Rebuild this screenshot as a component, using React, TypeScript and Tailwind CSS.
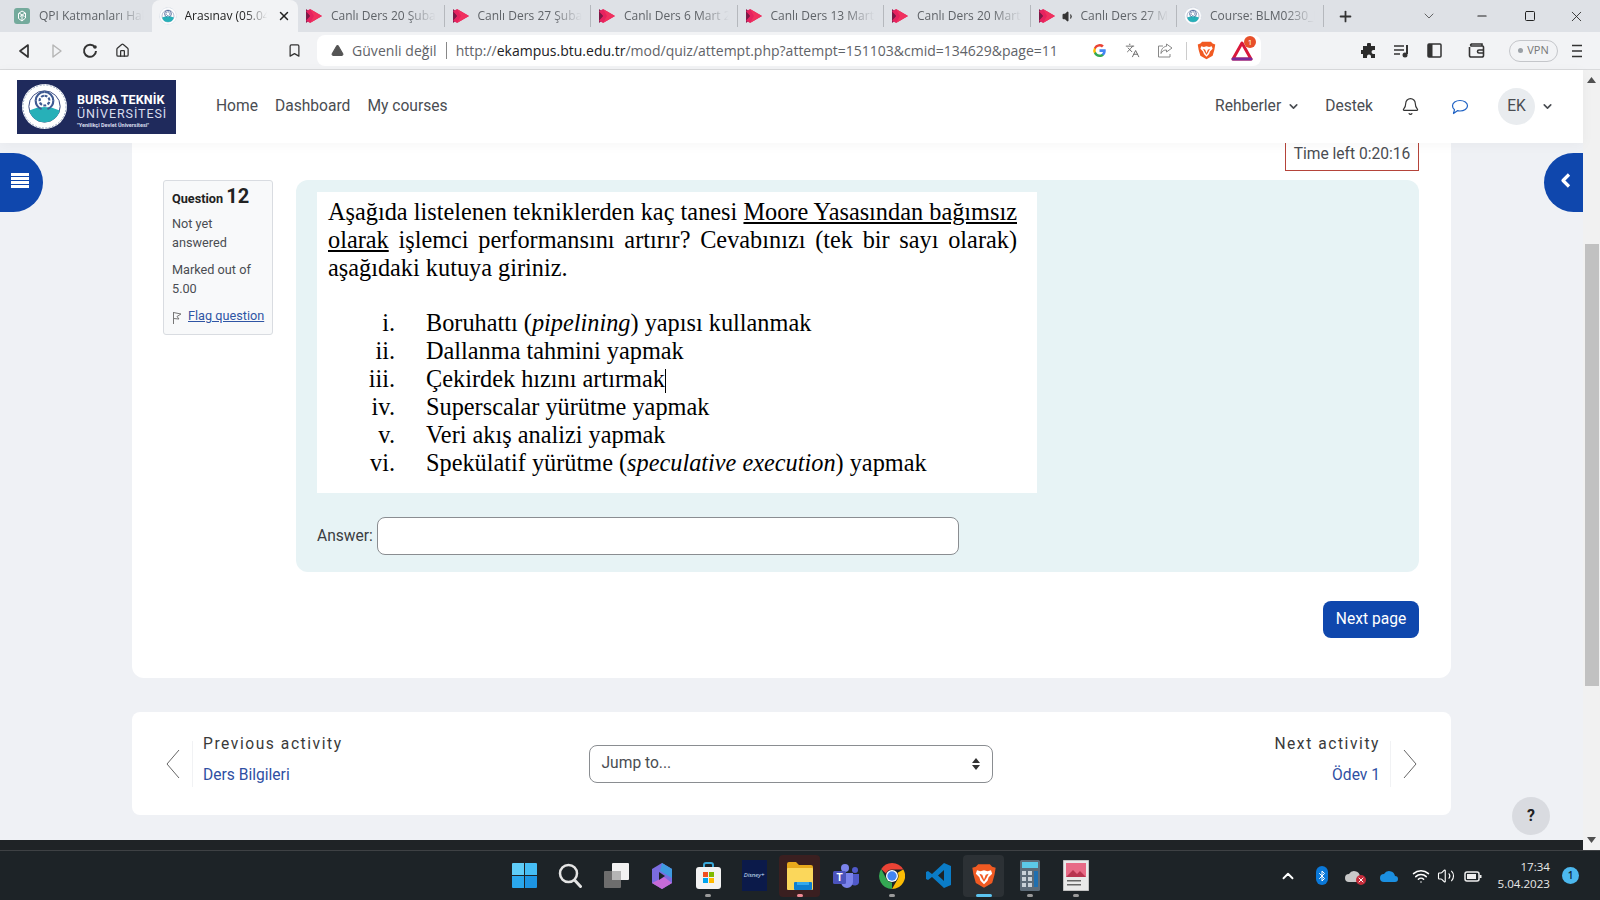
import {
  Bell,
  ChevronDown,
  ChevronUp,
  Home,
  Languages,
  Minus,
  Plus,
  Square,
  TriangleAlert,
  Volume1,
  Volume2,
  Wifi,
  X,
  Bluetooth,
  Bookmark,
} from "lucide-react";

const tabs = [
  { id: "qpi", label: "QPI Katmanları Hakkı", icon: "gpt" },
  { id: "exam", label: "Arasınav (05.04.2023)", icon: "btu", active: true },
  { id: "d1", label: "Canlı Ders 20 Şubat 2023", icon: "play" },
  { id: "d2", label: "Canlı Ders 27 Şubat 2023", icon: "play" },
  { id: "d3", label: "Canlı Ders 6 Mart 2023", icon: "play" },
  { id: "d4", label: "Canlı Ders 13 Mart 2023", icon: "play" },
  { id: "d5", label: "Canlı Ders 20 Mart 2023", icon: "play" },
  { id: "d6", label: "Canlı Ders 27 Mart 2023", icon: "play", sound: true },
  { id: "course", label: "Course: BLM0230_BLM", icon: "btu" },
];

const techniques = [
  { num: "i.", text: <>Boruhattı (<em>pipelining</em>) yapısı kullanmak</> },
  { num: "ii.", text: <>Dallanma tahmini yapmak</> },
  { num: "iii.", text: <>Çekirdek hızını artırmak<span className="inline-block w-px h-[24px] bg-black align-middle" /></> },
  { num: "iv.", text: <>Superscalar yürütme yapmak</> },
  { num: "v.", text: <>Veri akış analizi yapmak</> },
  { num: "vi.", text: <>Spekülatif yürütme (<em>speculative execution</em>) yapmak</> },
];

function BtuEmblem({ size = 16 }: { size?: number }) {
  return (
    <svg width={size} height={size} viewBox="0 0 48 48">
      <circle cx="24" cy="24" r="23" fill="#fff" />
      <circle cx="24" cy="24" r="22" fill="none" stroke="#8fa0bb" strokeWidth="1" strokeDasharray="2 1.500" />
      <circle cx="24" cy="24" r="16" fill="#fff" stroke="#3a4a80" strokeWidth="1" />
      <path d="M8.500 28q15.500-7 31 0a16 16 0 0 1-31 0z" fill="#27b0b8" />
      <g fill="none" stroke="#3f5a92" strokeWidth="2.200">
        <path d="M24 9a9 9 0 0 1 9 9" />
        <path d="M33 18a9 9 0 0 1-6 8.500" />
        <path d="M21 26.500a9 9 0 0 1-6-8.500" />
        <path d="M15 18a9 9 0 0 1 9-9" />
        <path d="M24 13a5 5 0 0 1 5 5 5 5 0 0 1-5 5 5 5 0 0 1-5-5 5 5 0 0 1 5-5z" strokeDasharray="3 1.500" />
      </g>
    </svg>
  );
}

function TabIcon({ kind }: { kind: string }) {
  if (kind === "gpt") {
    return (
      <svg width="16" height="16" viewBox="0 0 16 16">
        <rect width="16" height="16" rx="3" fill="#74aa9c" />
        <path d="M8 3l3.500 2v5L8 13l-3.500-2.500V5.500zM5 5l5.500 3.500M11 5L6 8.500M8 13V8" fill="none" stroke="#fff" strokeWidth="1" strokeLinejoin="round" />
      </svg>
    );
  }
  if (kind === "btu") return <BtuEmblem size={18} />;
  return (
    <svg width="18" height="18" viewBox="0 0 18 18">
      <path d="M1 2l9 7-9 7z" fill="#8e1f50" />
      <path d="M1 4.500L5 2l12 7-12 7-4-2.500L5 9z" fill="#e5225f" />
      <path d="M5 2l4 7-4 7 12-7z" fill="#f0315f" />
      <path d="M1 4.500L5 9l-4 4.500z" fill="#7c1846" />
    </svg>
  );
}

function TabBar() {
  return (
    <div className="h-8 bg-[#dee1e6] flex items-end shrink-0 font-['Open_Sans',sans-serif] text-[12px]">
      <div className="flex h-8 pl-[5px]">
        {tabs.map((tab, i) => (
          <div
            key={tab.id}
            className={
              tab.active
                ? "w-[146.500px] flex items-center gap-[8px] pl-[7px] pr-[7px] bg-[#f2f3f5] rounded-t-lg text-[#222]"
                : i === 0
                  ? "w-[146.500px] flex items-center gap-[9px] pl-[9px] pr-[6px] text-[#5f6368]"
                  : "w-[146.500px] flex items-center gap-[8px] pl-[7px] pr-[6px] text-[#5f6368] border-r border-[#b5b8bd] my-[5px]"
            }
          >
            <span className="shrink-0 flex"><TabIcon kind={tab.icon} /></span>
            {tab.sound && <Volume1 size={13} className="shrink-0 -mx-[2px] text-[#333] fill-[#333]" />}
            <span className="flex-1 overflow-hidden whitespace-nowrap [mask-image:linear-gradient(to_right,black_70%,transparent_98%)]">
              {tab.label}
            </span>
            {tab.active && <X size={14} strokeWidth={2.5} className="shrink-0 text-[#222]" />}
          </div>
        ))}
      </div>
      <div className="h-8 flex items-center flex-1 pl-[13px]">
        <Plus size={17} strokeWidth={2.5} className="text-[#333]" />
        <div className="flex-1" />
        <ChevronDown size={16} strokeWidth={1.2} className="text-[#444] mr-[38px]" />
        <Minus size={14} className="text-[#222] mr-[35px]" />
        <Square size={12} className="text-[#222] mr-[32px]" />
        <X size={17} strokeWidth={1.2} className="text-[#222] mr-[15px]" />
      </div>
    </div>
  );
}

function BraveIcon({ size = 20 }: { size?: number }) {
  return (
    <svg width={size} height={size} viewBox="0 0 24 24">
      <path d="M7 2h10l2 2 3 1-1 6-2 7-7 4-7-4-2-7-1-6 3-1z" fill="#f15a22" />
      <path d="M6 7l3 1 3-1 3 1 3-1 1 3-3 3-1 3-3 3-3-3-1-3-3-3z" fill="#fff" />
      <path d="M8 10l2.500 1 1.500 4 1.500-4 2.500-1-2 4-2 3-2-3z" fill="#f15a22" />
    </svg>
  );
}

function Toolbar() {
  return (
    <div className="h-[38px] bg-[#f2f3f5] border-b border-[#d9dadc] flex items-center shrink-0 pl-[7px] text-[#333]">
      <span className="w-[33px] flex justify-center"><svg width="14" height="16" viewBox="0 0 14 16"><path d="M11 2L3 8l8 6z" fill="none" stroke="#333" strokeWidth="1.700" strokeLinejoin="round" /></svg></span>
      <span className="w-[33px] flex justify-center"><svg width="14" height="16" viewBox="0 0 14 16"><path d="M3 2l8 6-8 6z" fill="none" stroke="#b5b5b5" strokeWidth="1.400" strokeLinejoin="round" /></svg></span>
      <span className="w-[33px] flex justify-center">
        <svg width="16" height="16" viewBox="0 0 16 16"><path d="M13 4.500A6 6 0 1 0 14 8" fill="none" stroke="#333" strokeWidth="2" /><circle cx="13" cy="4" r="1.800" fill="#333" /></svg>
      </span>
      <span className="w-[33px] flex justify-center"><Home size={15} strokeWidth={2} /></span>
      <div className="w-[139px]" />
      <span className="w-[33px] flex justify-center"><Bookmark size={15} strokeWidth={2} /></span>
      <div className="ml-[6px] w-[944px] h-[31px] bg-white rounded-lg flex items-center pl-[14px] font-['Open_Sans',sans-serif] text-[14px]">
        <TriangleAlert size={13} className="fill-[#555] text-[#555] mr-[8px]" />
        <span className="text-[#5f6368] tracking-[0.05px]">Güvenli değil</span>
        <span className="w-px h-[17px] bg-[#888] mx-[9px]" />
        <span className="text-[#5f6368]">
          http://<span className="text-[#202124]">ekampus.btu.edu.tr</span>/mod/quiz/attempt.php?attempt=151103&amp;cmid=134629&amp;page=11
        </span>
        <div className="flex-1" />
        <svg width="15" height="15" viewBox="0 0 24 24" className="mr-[18px]">
          <path d="M22 12.300c0-.8-.1-1.500-.2-2.200H12v4.200h5.600a4.800 4.800 0 0 1-2.100 3.100v2.600h3.400c2-1.800 3.100-4.500 3.100-7.700z" fill="#4285f4" />
          <path d="M12 22.500c2.800 0 5.200-.9 6.900-2.500l-3.400-2.600c-.9.600-2.100 1-3.500 1-2.700 0-5-1.800-5.800-4.300H3.200v2.700A10.500 10.500 0 0 0 12 22.500z" fill="#34a853" />
          <path d="M6.200 14.100a6.300 6.300 0 0 1 0-4.200V7.200H3.200a10.500 10.500 0 0 0 0 9.600z" fill="#fbbc05" />
          <path d="M12 5.600c1.500 0 2.900.5 3.900 1.500l3-3A10.500 10.500 0 0 0 3.200 7.200l3 2.700C7 7.400 9.300 5.600 12 5.600z" fill="#ea4335" />
        </svg>
        <Languages size={15} strokeWidth={1.500} className="text-[#666] mr-[17px]" />
        <svg width="16" height="15" viewBox="0 0 16 15" className="mr-[13px]">
          <path d="M6 3H1.500v11H13v-3" fill="none" stroke="#888" strokeWidth="1" />
          <path d="M9.500 1l5.500 4-5.500 4V7C7 7 5 8 4 10.500 4 6 6.500 3.500 9.500 3.300z" fill="none" stroke="#888" strokeWidth="1" strokeLinejoin="round" />
        </svg>
        <span className="w-px h-[18px] bg-[#ccc] mr-[9px]" />
        <BraveIcon size={21} />
        <span className="relative ml-[14px] flex">
          <svg width="22" height="20" viewBox="0 0 22 20">
            <path d="M11 2l9 16H2z" fill="none" stroke="#d9183b" strokeWidth="3" strokeLinejoin="round" />
            <path d="M2 18h18" stroke="#7a2a9a" strokeWidth="3" strokeLinecap="round" />
          </svg>
          <span className="absolute -top-[5px] -right-[3px] w-[12px] h-[12px] rounded-full bg-[#e8502a] text-white text-[8px] leading-[12px] text-center">1</span>
        </span>
        <span className="w-[8px]" />
      </div>
      <span className="ml-[100px] flex">
        <svg width="16" height="16" viewBox="0 0 16 16"><path d="M6 1.500a2 2 0 0 1 4 0V3h4v4h-1.500a2 2 0 0 0 0 4H14v4h-4v-1.500a2 2 0 0 0-4 0V15H2v-4H.5a2 2 0 0 1 0-4H2V3h4z" fill="#2b2b2b" /></svg>
      </span>
      <span className="ml-[17px] flex">
        <svg width="16" height="14" viewBox="0 0 16 14"><path d="M0 2h10M0 6h10M0 10h6" stroke="#333" strokeWidth="1.500" /><path d="M13 1v9" stroke="#333" strokeWidth="2" /><circle cx="11" cy="11" r="2.500" fill="#333" /></svg>
      </span>
      <span className="ml-[17px] flex">
        <svg width="15" height="15" viewBox="0 0 15 15"><rect x="1" y="1" width="13" height="13" rx="1" fill="none" stroke="#333" strokeWidth="1.500" /><rect x="1" y="1" width="4.500" height="13" fill="#333" /></svg>
      </span>
      <span className="ml-[26px] flex">
        <svg width="17" height="15" viewBox="0 0 17 15"><path d="M3 1h11v2.500M1.500 4v8.500a1.500 1.500 0 0 0 1.500 1.500h11a1.500 1.500 0 0 0 1.500-1.500V4A1 1 0 0 0 14.500 3H3A1.500 1.500 0 0 1 3 1" fill="none" stroke="#333" strokeWidth="1.600" /><path d="M15.500 7H11a1.500 1.500 0 0 0 0 3h4.500" fill="none" stroke="#333" strokeWidth="1.600" /></svg>
      </span>
      <span className="ml-[24px] w-[49px] h-[22px] rounded-full border border-[#c4c6ca] flex items-center justify-center gap-[4px] text-[11px] text-[#777] font-['Open_Sans',sans-serif]">
        <span className="w-[5px] h-[5px] rounded-full bg-[#9aa0a6]" />VPN
      </span>
      <span className="ml-[14px] flex">
        <svg width="10" height="14" viewBox="0 0 10 14"><path d="M0 1.500h10M0 7h10M0 12.500h10" stroke="#333" strokeWidth="1.500" /></svg>
      </span>
    </div>
  );
}

function Logo() {
  return (
    <div className="w-[159px] h-[54px] bg-[#1f2a5c] flex items-center pl-[4px] shrink-0">
      <BtuEmblem size={47} />
      <div className="ml-[9px] pt-[10px] text-white leading-none whitespace-nowrap">
        <div className="text-[12.500px] font-bold tracking-[0.1px]">BURSA TEKNİK</div>
        <div className="text-[12.500px] tracking-[0.9px] mt-[1px] text-[#d7dcec]">ÜNİVERSİTESİ</div>
        <div className="text-[5.500px] font-bold mt-[3px] text-[#d7dcec]">"Yenilikçi Devlet Üniversitesi"</div>
      </div>
    </div>
  );
}

function NavBar() {
  return (
    <nav className="relative z-10 h-[73px] bg-white shadow-[0_2px_12px_rgba(0,0,0,0.04)] flex items-center pl-[17px] shrink-0 text-[15.600px] text-[#4a4d52]">
      <Logo />
      <div className="ml-[40px] flex gap-[17px] pt-[1px]">
        <a>Home</a>
        <a>Dashboard</a>
        <a>My courses</a>
      </div>
      <div className="flex-1" />
      <a className="pt-[1px]">Rehberler</a>
      <ChevronDown size={13} strokeWidth={3} className="ml-[6px]" />
      <a className="ml-[25px] pt-[1px]">Destek</a>
      <Bell size={19} strokeWidth={1.500} className="ml-[28px] text-[#333]" />
      <svg width="18" height="16" viewBox="0 0 18 16" className="ml-[31px]">
        <path d="M9 1.500c4.200 0 7.500 2.400 7.500 5.200S13.200 12 9 12c-.9 0-1.800-.1-2.600-.3L2.500 14.500l1-3.800C2.200 9.700 1.500 8.300 1.500 6.700 1.500 3.900 4.800 1.500 9 1.500z" fill="none" stroke="#1f62c4" strokeWidth="1.200" strokeLinejoin="round" />
      </svg>
      <span className="ml-[29px] w-[37px] h-[37px] rounded-full bg-[#e9ecef] flex items-center justify-center pt-[1px]">EK</span>
      <ChevronDown size={13} strokeWidth={3} className="ml-[6px] mr-[29px]" />
    </nav>
  );
}

function QuestionInfo() {
  return (
    <div className="w-[110px] h-[155px] shrink-0 bg-[#f8f9fa] border border-[#d9dce1] rounded-[3px] px-[8px] pt-[3px] text-[12.700px] text-[#4a4d52]">
      <div className="text-[#222] font-bold leading-[24px]">
        Question <span className="text-[20px]">12</span>
      </div>
      <div className="leading-[19px] mt-[3px]">Not yet answered</div>
      <div className="leading-[18.500px] mt-[9px]">Marked out of 5.00</div>
      <div className="mt-[9px] flex items-center gap-[6px] whitespace-nowrap leading-[18px]">
        <svg width="10" height="13" viewBox="0 0 10 13" className="shrink-0 mt-[3px]"><path d="M1.500 1v12M1.500 1.500L9 3 5 5.500 7 8 1.500 7.500" fill="none" stroke="#777" strokeWidth="1" /></svg>
        <a className="text-[#2f55a4] underline">Flag question</a>
      </div>
    </div>
  );
}

function QuestionImage() {
  return (
    <div className="w-[720px] h-[301px] bg-white pl-[11px] pr-[20px] pt-[6px] text-black font-['Liberation_Serif',serif] text-[24.300px] leading-[27.800px]">
      <p className="text-justify">
        Aşağıda listelenen tekniklerden kaç tanesi <u>Moore Yasasından bağımsız</u> <u>olarak</u> işlemci performansını artırır? Cevabınızı (tek bir sayı olarak) aşağıdaki kutuya giriniz.
      </p>
      <ul className="mt-[28px]">
        {techniques.map((item) => (
          <li key={item.num} className="flex">
            <span className="w-[67px] text-right shrink-0">{item.num}</span>
            <span className="ml-[31px]">{item.text}</span>
          </li>
        ))}
      </ul>
    </div>
  );
}

function ActivityNav() {
  return (
    <div className="mt-[34px] h-[103px] bg-white rounded-lg grid grid-cols-[1fr_404px_1fr] items-center pl-[31px] pr-[33px] text-[15.600px]">
      <div className="flex items-center">
        <svg width="16" height="32" viewBox="0 0 16 32" className="ml-[2px]"><path d="M14 2L2 16l12 14" fill="none" stroke="#666" strokeWidth="1" /></svg>
        <div className="ml-[11px] border-l border-[#f1f2f4] pl-[10px] h-[46px]">
          <div className="-mt-[7px] h-[51px] flex flex-col justify-between">
            <div className="leading-[20px] tracking-[1.550px] text-[#3a3a3a]">Previous activity</div>
            <a className="leading-[20px] text-[#2f4fa3]">Ders Bilgileri</a>
          </div>
        </div>
      </div>
      <div className="h-[38px] border border-[#8a8d91] rounded-lg flex items-center justify-between px-[12px] text-[#4a4d52]">
        <span className="pt-[1px]">Jump to...</span>
        <svg width="8" height="12" viewBox="0 0 8 12"><path d="M4 0l4 5H0zM4 12L0 7h8z" fill="#333" /></svg>
      </div>
      <div className="flex items-center justify-end">
        <div className="mr-[11px] border-r border-[#f1f2f4] pr-[10px] h-[46px] text-right">
          <div className="-mt-[7px] h-[51px] flex flex-col justify-between">
            <div className="leading-[20px] tracking-[1.550px] text-[#3a3a3a]">Next activity</div>
            <a className="leading-[20px] text-[#2f4fa3]">Ödev 1</a>
          </div>
        </div>
        <svg width="16" height="32" viewBox="0 0 16 32"><path d="M2 2l12 14L2 30" fill="none" stroke="#666" strokeWidth="1" /></svg>
      </div>
    </div>
  );
}

function Scrollbar() {
  return (
    <div className="w-[17px] bg-[#f1f1f1] shrink-0 flex flex-col items-center">
      <svg width="9" height="6" viewBox="0 0 9 6" className="mt-[7px]"><path d="M4.500 0L9 6H0z" fill="#505050" /></svg>
      <div className="mt-[161px] w-[14px] h-[442px] bg-[#c1c1c1]" />
      <div className="flex-1" />
      <svg width="9" height="6" viewBox="0 0 9 6" className="mb-[7px]"><path d="M0 0h9L4.500 6z" fill="#505050" /></svg>
    </div>
  );
}

function TaskIcon({ children, dot, bg }: { children: React.ReactNode; dot?: string; bg?: string }) {
  return (
    <div className="relative w-[46px] h-[50px] flex items-center justify-center">
      {bg && <div className={`absolute left-[2px] right-[3px] top-[4px] bottom-[4px] rounded ${bg}`} />}
      <div className="relative flex">{children}</div>
      {dot && <div className={`absolute bottom-[4px] left-1/2 -translate-x-1/2 h-[3px] rounded-full ${dot}`} />}
    </div>
  );
}

function Taskbar() {
  return (
    <div className="h-[50px] shrink-0 bg-[#1d2327] border-t border-[#3e4144] relative flex items-center font-['Open_Sans',sans-serif]">
      <div className="ml-[501px] flex">
        <TaskIcon>
          <svg width="25" height="25" viewBox="0 0 25 25">
            <path d="M0 1a1 1 0 0 1 1-1h11v12H0z" fill="#5fcdf8" />
            <path d="M13 0h11a1 1 0 0 1 1 1v11H13z" fill="#45bdf5" />
            <path d="M0 13h12v12H1a1 1 0 0 1-1-1z" fill="#2aa7ec" />
            <path d="M13 13h12v11a1 1 0 0 1-1 1H13z" fill="#1d95e3" />
          </svg>
        </TaskIcon>
        <TaskIcon>
          <svg width="24" height="25" viewBox="0 0 24 25"><circle cx="10.500" cy="10.500" r="8.500" fill="none" stroke="#e4e4e4" strokeWidth="2.500" /><path d="M16.500 17l6 6.500" stroke="#e4e4e4" strokeWidth="3" strokeLinecap="round" /></svg>
        </TaskIcon>
        <TaskIcon>
          <svg width="25" height="25" viewBox="0 0 25 25"><rect x="8" y="0" width="17" height="17" rx="1" fill="#f2f2f2" /><rect x="0" y="8" width="17" height="17" rx="1" fill="#6d6d6d" /><rect x="8" y="8" width="9" height="9" fill="#b5b5b5" /></svg>
        </TaskIcon>
        <TaskIcon>
          <svg width="22" height="26" viewBox="0 0 22 26">
            <path d="M11 0l10 6v14l-10 6-10-6V6z" fill="#7b6ce0" />
            <path d="M11 0l10 6v9L9 8z" fill="#3f9ae0" />
            <path d="M1 20l12-6 8 6-10 6z" fill="#c66bd8" />
            <path d="M8 9l6 4-6 4z" fill="#1d2327" />
          </svg>
        </TaskIcon>
        <TaskIcon dot="w-[6px] bg-[#9a9a9a]">
          <svg width="25" height="27" viewBox="0 0 25 27">
            <path d="M8 6V3a2 2 0 0 1 2-2h5a2 2 0 0 1 2 2v3" fill="none" stroke="#3aa8d8" strokeWidth="2" />
            <rect x="0" y="5" width="25" height="22" rx="3" fill="#f3f3f3" />
            <rect x="7" y="10" width="5" height="5" fill="#f25022" /><rect x="13" y="10" width="5" height="5" fill="#7fba00" />
            <rect x="7" y="16" width="5" height="5" fill="#00a4ef" /><rect x="13" y="16" width="5" height="5" fill="#ffb900" />
          </svg>
        </TaskIcon>
        <TaskIcon>
          <div className="w-[25px] h-[31px] bg-[#0b1a4a] flex items-center justify-center text-[6px] text-[#cfe3ff] italic">Disney+</div>
        </TaskIcon>
        <TaskIcon dot="w-[6px] bg-[#ee8a94]" bg="bg-[#3a1f20]">
          <svg width="26" height="28" viewBox="0 0 26 28">
            <path d="M0 2a2 2 0 0 1 2-2h7l3 3h12a2 2 0 0 1 2 2v4H0z" fill="#e8a91c" />
            <rect x="0" y="6" width="26" height="22" rx="1" fill="#fbd75b" />
            <rect x="7" y="20" width="18" height="8" rx="1" fill="#0f7fd0" />
            <rect x="10" y="20" width="12" height="3" fill="#35a9ec" />
          </svg>
        </TaskIcon>
        <TaskIcon>
          <svg width="26" height="24" viewBox="0 0 26 24">
            <circle cx="12" cy="4" r="4" fill="#7b83eb" /><circle cx="22" cy="6" r="3" fill="#5059c9" />
            <path d="M17 10h9v7a4 4 0 0 1-8 1z" fill="#5059c9" />
            <path d="M7 9h13v9a6 6 0 0 1-12 0z" fill="#7b83eb" />
            <rect x="0" y="7" width="13" height="13" rx="1.500" fill="#4b53bc" />
            <text x="6.500" y="17" textAnchor="middle" fontSize="10" fontWeight="700" fill="#fff" fontFamily="Liberation Sans, sans-serif">T</text>
          </svg>
        </TaskIcon>
        <TaskIcon dot="w-[6px] bg-[#9a9a9a]">
          <svg width="26" height="26" viewBox="0 0 26 26">
            <path d="M13 0a13 13 0 0 1 11.300 6.500H13a6.500 6.500 0 0 0-6 4L2.200 6A13 13 0 0 1 13 0z" fill="#ea4335" />
            <path d="M24.300 6.500A13 13 0 0 1 13 26l5.600-9.750a6.500 6.500 0 0 0 0-6.500z" fill="#fbbc05" />
            <path d="M2.200 6L7.700 16.500a6.500 6.500 0 0 0 5.300 3L13 26A13 13 0 0 1 2.200 6z" fill="#34a853" />
            <circle cx="13" cy="13" r="6" fill="#fff" /><circle cx="13" cy="13" r="4.700" fill="#4285f4" />
          </svg>
        </TaskIcon>
        <TaskIcon>
          <svg width="25" height="25" viewBox="0 0 25 25">
            <path d="M18 0l7 3v19l-7 3L6 14l-4 3-2-1V9l2-1 4 3z" fill="#0a7cc7" />
            <path d="M18 7l-6 5.500 6 5.500z" fill="#1d2327" />
          </svg>
        </TaskIcon>
        <TaskIcon dot="w-[16px] bg-[#5cc4f0]" bg="bg-[#2c3135]"><BraveIcon size={28} /></TaskIcon>
        <TaskIcon dot="w-[6px] bg-[#9a9a9a]">
          <svg width="20" height="31" viewBox="0 0 20 31">
            <rect width="20" height="31" rx="1.500" fill="#5d6b78" />
            <rect x="2" y="2" width="16" height="6" fill="#5cc9e8" />
            <g fill="#c9d1d8"><rect x="2" y="11" width="4" height="4" /><rect x="8" y="11" width="4" height="4" /><rect x="2" y="17" width="4" height="4" /><rect x="8" y="17" width="4" height="4" /><rect x="2" y="23" width="4" height="4" /><rect x="8" y="23" width="4" height="4" /></g>
            <rect x="14" y="11" width="4" height="16" fill="#1f6fb0" />
          </svg>
        </TaskIcon>
        <TaskIcon dot="w-[6px] bg-[#9a9a9a]">
          <svg width="26" height="31" viewBox="0 0 26 31">
            <rect width="26" height="31" fill="#e9e9e9" stroke="#999" strokeWidth="1" />
            <rect x="3" y="3" width="20" height="14" fill="#e86a86" />
            <path d="M3 17l7-7 4 4 3-3 6 6z" fill="#b8344f" />
            <rect x="4" y="20" width="14" height="1.500" fill="#666" /><rect x="4" y="24" width="14" height="1.500" fill="#666" />
          </svg>
        </TaskIcon>
      </div>
      <div className="flex-1" />
      <div className="flex items-center text-white">
        <ChevronUp size={18} strokeWidth={2.500} />
        <span className="ml-[19px] w-[12px] h-[19px] rounded-full bg-[#0a78d8] flex items-center justify-center"><Bluetooth size={12} strokeWidth={2} /></span>
        <span className="relative ml-[17px] flex">
          <svg width="18" height="12" viewBox="0 0 18 12"><path d="M4 12a4 4 0 0 1 0-8 6 6 0 0 1 11 2 3 3 0 0 1 0 6z" fill="#c8c8c8" /></svg>
          <span className="absolute -right-[3px] -bottom-[3px] w-[10px] h-[10px] rounded-full bg-[#c42b3a] flex items-center justify-center"><X size={8} strokeWidth={3} /></span>
        </span>
        <svg width="18" height="12" viewBox="0 0 18 12" className="ml-[17px]"><path d="M4 12a4 4 0 0 1 0-8 6 6 0 0 1 11 2 3 3 0 0 1 0 6z" fill="#1b8fe0" /></svg>
        <Wifi size={18} className="ml-[14px]" />
        <Volume2 size={18} strokeWidth={1.500} className="ml-[7px]" />
        <svg width="18" height="14" viewBox="0 0 18 14" className="ml-[9px]"><rect x="1" y="3" width="14" height="9" rx="2" fill="none" stroke="#eee" strokeWidth="1.500" /><rect x="3" y="5" width="9" height="5" fill="#eee" /><rect x="15.500" y="6" width="2" height="3" fill="#eee" /></svg>
        <div className="ml-[16px] -mt-[2px] text-right text-[11.600px] leading-[17px] text-[#e8e8e8]">
          <div>17:34</div>
          <div>5.04.2023</div>
        </div>
        <span className="ml-[12px] mr-[21px] w-[17px] h-[17px] rounded-full bg-[#4cb8ee] text-[#0e2a3c] text-[10px] font-semibold flex items-center justify-center">1</span>
      </div>
    </div>
  );
}

export default function App() {
  return (
    <div className="w-[1600px] h-[900px] overflow-hidden flex flex-col font-['Roboto',sans-serif]">
      <TabBar />
      <Toolbar />
      <div className="flex-1 min-h-0 flex">
        <div className="relative flex-1 min-w-0 flex flex-col bg-[#eff1f5]">
          <NavBar />
          <main className="flex-1 min-h-0 px-[132px]">
            <div className="h-[535px] bg-white rounded-b-xl pt-[37px] pl-[31px] pr-[32px]">
              <div className="flex gap-[23px]">
                <QuestionInfo />
                <div className="flex-1 h-[392px] bg-[#e7f3f5] rounded-xl pt-[12px] pl-[21px]">
                  <QuestionImage />
                  <div className="mt-[24px] flex items-center gap-[4px] text-[15.600px] text-[#3a3d42]">
                    <label className="pt-[2px]">Answer:</label>
                    <input className="w-[582px] h-[38px] bg-white border border-[#8a8d91] rounded-lg" />
                  </div>
                </div>
              </div>
              <div className="mt-[29px] flex justify-end">
                <button className="w-[96px] h-[37px] rounded-lg bg-[#0f47ad] text-white text-[15.600px]">Next page</button>
              </div>
            </div>
            <ActivityNav />
          </main>
          <div className="h-[10px] bg-[#1f2326] shrink-0" />

          {/* floating bits */}
          <div className="absolute z-20 left-0 top-[83px] w-[43px] h-[59px] rounded-r-full bg-[#0f47ad] flex items-center pl-[11px] pb-[4px]">
            <svg width="18" height="15" viewBox="0 0 18 15">
              <path d="M0 0h18v3H0zM0 4h18v3H0zM0 8h18v3H0zM0 12h18v3H0z" fill="#fff" />
            </svg>
          </div>
          <div className="absolute z-20 right-0 top-[83px] w-[39px] h-[59px] rounded-l-full bg-[#0f47ad] flex items-center pl-[16px] pb-[4px]">
            <svg width="11" height="15" viewBox="0 0 11 15"><path d="M9 1.500L3 7.500l6 6" fill="none" stroke="#fff" strokeWidth="3.200" strokeLinejoin="round" /></svg>
          </div>
          <div className="absolute z-[5] left-[1285px] top-[73px] w-[134px] h-[28px] bg-white border-x border-b border-[#b5443a] text-[15.600px] text-[#4a4d52] flex items-center justify-center pb-[3px]">
            Time left 0:20:16
          </div>
          <div className="absolute z-20 left-[1512px] top-[727px] w-[38px] h-[38px] rounded-full bg-[#d9dbe0] text-[#222] font-bold text-[16px] flex items-center justify-center">
            ?
          </div>
        </div>
        <Scrollbar />
      </div>
      <Taskbar />
    </div>
  );
}
